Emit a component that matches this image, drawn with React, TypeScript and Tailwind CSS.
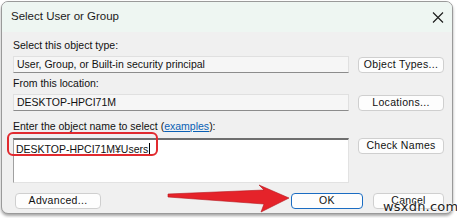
const ui = { fontFamily: '"Liberation Sans", Arial, sans-serif' };

const Btn: React.FC<{ label: string; w: string; primary?: boolean }> = ({ label, w, primary }) => (
  <div
    className={`${w} h-[16px] flex items-center justify-center rounded-[4px] bg-[#fdfdfd] text-[10.5px] tracking-[0.3px] text-[#111] border ${
      primary ? "border-[#1a6cc2]" : "border-[#cfcfcf]"
    }`}
  >
    {label}
  </div>
);

const Field: React.FC<{ text: string }> = ({ text }) => (
  <div className="w-[336px] h-[17px] flex items-center pl-[3px] bg-[#f6f6f6] border border-[#e0e0e0] border-b-[#8c8c8c] text-[10.5px] text-[#111]">
    {text}
  </div>
);

const App: React.FC = () => {
  return (
    <div className="w-[457px] h-[218px] bg-white relative overflow-hidden" style={ui}>
      <div className="ml-[1px] mt-[1px] w-[452px] h-[213px] rounded-[7px] border border-[#9a9a9a] bg-[#f0f0f0] flex flex-col overflow-hidden shadow-[0_2px_3px_rgba(0,0,0,0.35)]">
        {/* title bar */}
        <div className="h-[30px] shrink-0 bg-[#eef6f2] flex items-center justify-between pl-[9px] pr-[7px]">
          <span className="text-[11.5px] text-[#1b1b1b]">Select User or Group</span>
          <svg width="12" height="11" viewBox="0 0 12 11" className="mr-[1px]">
            <path d="M1 0.5 L11 10.5 M11 0.5 L1 10.5" stroke="#1b1b1b" strokeWidth="1.1" />
          </svg>
        </div>

        <div className="flex flex-col pl-[11px] text-[#111]">
          <div className="mt-[7px] h-[14px] flex items-center text-[10.5px]">Select this object type:</div>
          <div className="mt-[3px] flex items-end gap-[9px]">
            <Field text="User, Group, or Built-in security principal" />
            <Btn label="Object Types..." w="w-[86px]" />
          </div>

          <div className="mt-[4px] h-[14px] flex items-center text-[10.5px]">From this location:</div>
          <div className="mt-[3px] flex items-end gap-[9px]">
            <Field text="DESKTOP-HPCI71M" />
            <Btn label="Locations..." w="w-[86px]" />
          </div>

          <div className="mt-[9px] h-[14px] flex items-center text-[10.5px]">
            Enter the object name to select (
            <span className="text-[#0a5fb4] underline">examples</span>):
          </div>
          <div className="mt-[4px] flex items-start gap-[9px]">
            <div className="w-[336px] h-[45px] bg-white border border-[#a0a0a0] border-t-[2px] border-t-[#6e6e6e] border-r-[#e2e2e2] border-b-[#e2e2e2] pl-[2px] pt-[3px] text-[10.5px] flex items-start">
              <span className="leading-[13px]">DESKTOP-HPCI71M¥Users</span>
              <span className="w-[1px] h-[13px] bg-black ml-[1px]" />
            </div>
            <Btn label="Check Names" w="w-[86px]" />
          </div>

          <div className="mt-[10px] flex items-center">
            <div className="ml-[2px]">
              <Btn label="Advanced..." w="w-[86px]" />
            </div>
            <div className="ml-[190px]">
              <Btn label="OK" w="w-[72px]" primary />
            </div>
            <div className="ml-[10px]">
              <Btn label="Cancel" w="w-[71px]" />
            </div>
          </div>
        </div>
      </div>

      {/* red highlight box */}
      <div className="absolute left-[7px] top-[132px] w-[151px] h-[24px] rounded-[6px] border-2 border-[#e12a2f]" />

      {/* red arrow */}
      <svg className="absolute left-0 top-0" width="457" height="218" viewBox="0 0 457 218">
        <polygon
          points="168,194 264,190 259,185 289,198 261,212 264,204 168,197"
          fill="#e5232a"
          stroke="#b5161c"
          strokeWidth="0.6"
          strokeLinejoin="round"
        />
      </svg>

      {/* watermark */}
      <div
        className="absolute left-[383px] top-[200px] text-[13px] leading-[14px] text-[#222] tracking-[0.2px]"
        style={{ fontFamily: '"DejaVu Sans", sans-serif', textShadow: "0 0 2px #fff, 0 0 2px #fff" }}
      >
        wsxdn.com
      </div>
    </div>
  );
};

export default App;
